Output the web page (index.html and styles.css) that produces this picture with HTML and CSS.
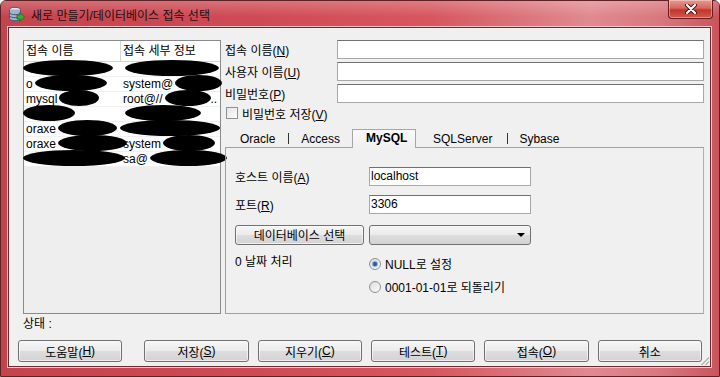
FILE: index.html
```html
<!DOCTYPE html>
<html lang="ko">
<head>
    <meta charset="UTF-8">
    <title>새로 만들기/데이터베이스 접속 선택</title>
    <link rel="stylesheet" href="styles.css">
</head>
<body>
    <div class="window">
        <!-- Title bar -->
        <div class="titlebar">
            <svg class="app-icon" width="17" height="17" viewBox="0 0 17 17">
                <ellipse cx="7" cy="3.5" rx="5.5" ry="2.2" fill="#dfe8f2" stroke="#4a5c78"/>
                <path d="M1.5 3.5 V12.5 A5.5 2.2 0 0 0 12.5 12.5 V3.5" fill="#9fb3cc" stroke="#4a5c78"/>
                <path d="M1.5 6.5 A5.5 2.2 0 0 0 12.5 6.5 M1.5 9.5 A5.5 2.2 0 0 0 12.5 9.5" fill="none" stroke="#4a5c78"/>
                <path d="M9 9 H12 V6.5 L16.5 11 L12 15.5 V13 H9 Z" fill="#3aa83a" stroke="#1d6b1d" stroke-width="0.8"/>
            </svg>
            <span class="title">새로 만들기/데이터베이스 접속 선택</span>
            <div class="close-btn">
                <svg width="14" height="10" viewBox="0 0 14 10">
                    <path d="M3 1 L11 9 M11 1 L3 9" stroke="#4a1010" stroke-width="4" stroke-linecap="round"/>
                    <path d="M3 1 L11 9 M11 1 L3 9" stroke="#fff" stroke-width="2.2" stroke-linecap="round"/>
                </svg>
            </div>
        </div>

        <div class="client">
            <div class="main">
                <!-- Connection list -->
                <div class="conn-list">
                    <div class="list-head">
                        <div class="cell">접속 이름</div>
                        <div class="cell">접속 세부 정보</div>
                    </div>
                    <div class="list-row">
                        <div class="cell"><span class="blob b88 pull"></span></div>
                        <div class="cell"><span class="blob b92"></span></div>
                    </div>
                    <div class="list-row">
                        <div class="cell">o<span class="blob b70"></span></div>
                        <div class="cell">system@<span class="blob b45"></span></div>
                    </div>
                    <div class="list-row">
                        <div class="cell">mysql<span class="blob b38"></span></div>
                        <div class="cell">root@//<span class="blob b44"></span>..</div>
                    </div>
                    <div class="list-row">
                        <div class="cell"><span class="blob b50 pull"></span></div>
                        <div class="cell"><span class="blob b74"></span></div>
                    </div>
                    <div class="list-row">
                        <div class="cell">oraxe<span class="blob b57"></span></div>
                        <div class="cell"><span class="blob b98 pull"></span></div>
                    </div>
                    <div class="list-row">
                        <div class="cell">oraxe<span class="blob b67"></span></div>
                        <div class="cell">system<span class="blob b50"></span></div>
                    </div>
                    <div class="list-row">
                        <div class="cell"><span class="blob b100 pull"></span></div>
                        <div class="cell">sa@<span class="blob b75"></span></div>
                    </div>
                </div>

                <!-- Connection form -->
                <div class="form">
                    <div class="field">
                        <label>접속 이름(<u>N</u>)</label>
                        <div class="input wide"></div>
                    </div>
                    <div class="field">
                        <label>사용자 이름(<u>U</u>)</label>
                        <div class="input wide"></div>
                    </div>
                    <div class="field">
                        <label>비밀번호(<u>P</u>)</label>
                        <div class="input wide"></div>
                    </div>
                    <div class="check-row">
                        <span class="checkbox"></span>
                        <span>비밀번호 저장(<u>V</u>)</span>
                    </div>

                    <div class="tabs">
                        <span class="tab t-oracle">Oracle</span>
                        <span class="tab-sep s1"></span>
                        <span class="tab t-access">Access</span>
                        <span class="tab active">MySQL</span>
                        <span class="tab t-sqlserver">SQLServer</span>
                        <span class="tab-sep s2"></span>
                        <span class="tab t-sybase">Sybase</span>
                    </div>
                    <div class="tab-panel">
                        <div class="prow first">
                            <label>호스트 이름(<u>A</u>)</label>
                            <div class="input short">localhost</div>
                        </div>
                        <div class="prow">
                            <label>포트(<u>R</u>)</label>
                            <div class="input short">3306</div>
                        </div>
                        <div class="prow combo-row">
                            <div class="btn db-btn">데이터베이스 선택</div>
                            <div class="combo"><span class="arrow"></span></div>
                        </div>
                        <div class="date-row">
                            <label>0 날짜 처리</label>
                            <div class="radios">
                                <div class="radio-item"><span class="radio checked"></span>NULL로 설정</div>
                                <div class="radio-item"><span class="radio"></span>0001-01-01로 되돌리기</div>
                            </div>
                        </div>
                    </div>
                </div>
            </div>

            <div class="status">상태 :</div>

            <div class="buttons">
                <div class="btn foot help">도움말(<u>H</u>)</div>
                <div class="btn foot">저장(<u>S</u>)</div>
                <div class="btn foot">지우기(<u>C</u>)</div>
                <div class="btn foot">테스트(<u>T</u>)</div>
                <div class="btn foot">접속(<u>O</u>)</div>
                <div class="btn foot">취소</div>
            </div>
            <div class="grip"></div>
        </div>
    </div>
</body>
</html>
```

FILE: styles.css
```css
body {
    margin: 0;
    width: 720px;
    height: 377px;
    overflow: hidden;
    font-family: "Liberation Sans", "Noto Sans CJK KR", sans-serif;
    font-size: 12px;
    color: #000;
    background: #fff;
}
u {
    text-decoration: underline;
    text-underline-offset: 1px;
}
.window {
    width: 720px;
    height: 377px;
    box-sizing: border-box;
    padding: 0 8px 9px 7px;
    display: flex;
    flex-direction: column;
    background: linear-gradient(to right, #c4444d 0%, #cf4a54 35%, #d7575f 60%, #e08a90 82%, #d9777e 92%, #c9545c 100%);
    border: 1px solid #5e2226;
    border-radius: 6px 6px 0 0;
}
.titlebar {
    height: 27px;
    display: flex;
    align-items: center;
    position: relative;
    background: linear-gradient(to bottom, rgba(255,255,255,0.22), rgba(255,255,255,0) 60%);
    margin: 0 -8px 0 -7px;
    padding-left: 7px;
}
.app-icon {
    margin-top: 1px;
}
.title {
    margin-left: 6px;
    color: #1e1012;
    font-size: 12px;
    margin-top: 1px;
}
.close-btn {
    position: absolute;
    right: 6px;
    top: -1px;
    width: 43px;
    height: 18px;
    display: flex;
    align-items: center;
    justify-content: center;
    border: 1px solid #6a1c1c;
    border-top: none;
    border-radius: 0 0 4px 4px;
    background: linear-gradient(to bottom, #e79a92 0%, #d8665c 45%, #c1362b 55%, #cf5a4e 100%);
    box-shadow: inset 0 0 0 1px rgba(255,255,255,0.35);
}
.client {
    flex: 1;
    position: relative;
    background: #f0f0f0;
    border: 1px solid #6a2a2f;
    box-shadow: 0 0 0 1px #f2c6c9;
    padding: 12px 8px 4px 14px;
    display: flex;
    flex-direction: column;
}
.main {
    display: flex;
    height: 274px;
}
.conn-list {
    width: 196px;
    border: 1px solid #8a8a8a;
    background: #eeeeee;
}
.list-head, .list-row {
    display: grid;
    grid-template-columns: 97px 1fr;
    background: #fff;
}
.list-head {
    height: 20px;
    line-height: 20px;
    border-bottom: 1px solid #d5d5d5;
}
.list-head .cell:first-child {
    border-right: 1px solid #d5d5d5;
}
.list-row {
    height: 14px;
    line-height: 14px;
    border-bottom: 1px solid #f0f0f0;
}
.cell {
    padding-left: 2px;
    white-space: nowrap;
    overflow: visible;
}
.blob {
    display: inline-block;
    height: 16px;
    background: #000;
    border-radius: 50%;
    vertical-align: middle;
    margin-top: -3px;
    margin-left: 2px;
}
.blob.pull {
    margin-left: -3px;
}
.b38 { width: 40px; }
.b44 { width: 46px; }
.b45 { width: 47px; }
.b50 { width: 52px; }
.b57 { width: 59px; }
.b67 { width: 69px; }
.b70 { width: 72px; }
.b74 { width: 76px; }
.b75 { width: 77px; }
.b88 { width: 90px; }
.b92 { width: 94px; }
.b98 { width: 100px; }
.b100 { width: 102px; }

.form {
    margin-left: 4px;
    width: 480px;
    display: flex;
    flex-direction: column;
}
.field {
    display: flex;
    align-items: center;
    height: 19px;
    margin-bottom: 3px;
}
.field label {
    width: 112px;
}
.input {
    box-sizing: border-box;
    height: 19px;
    background: #fff;
    border: 1px solid #a8a8a8;
    border-top-color: #707070;
    line-height: 17px;
    padding-left: 1px;
}
.input.wide {
    width: 367px;
}
.input.short {
    width: 162px;
}
.check-row {
    display: flex;
    align-items: center;
    height: 14px;
    margin-top: 0;
}
.checkbox {
    box-sizing: border-box;
    width: 12px;
    height: 12px;
    margin-left: 1px;
    margin-right: 4px;
    border: 1px solid #8e8f8f;
    background: linear-gradient(135deg, #e4e4e4, #fdfdfd);
}
.tabs {
    display: flex;
    align-items: center;
    height: 19px;
    margin-top: 8px;
    position: relative;
    z-index: 1;
}
.tab {
    padding-top: 3px;
}
.t-oracle { margin-left: 15px; }
.t-access { margin-left: 12px; }
.t-sqlserver { margin-left: 17px; }
.t-sybase { margin-left: 11px; }
.tab-sep {
    width: 1px;
    height: 11px;
    background: #333;
    margin-top: 3px;
}
.s1 { margin-left: 13px; }
.s2 { margin-left: 15px; }
.tab.active {
    box-sizing: border-box;
    margin-left: 12px;
    width: 64px;
    height: 19px;
    align-self: flex-end;
    padding: 1px 0 0 13px;
    font-weight: bold;
    border: 1px solid #a6a6a6;
    border-bottom: none;
    background: linear-gradient(to bottom, #fafafa, #f0f0f0);
    margin-bottom: -1px;
}
.tab-panel {
    box-sizing: border-box;
    height: 169px;
    border: 1px solid #a0a0a0;
    border-right-color: #b0b0b0;
    padding-left: 9px;
}
.prow {
    display: flex;
    align-items: center;
    height: 19px;
    margin-top: 9px;
}
.prow.first {
    margin-top: 19px;
}
.prow label {
    width: 134px;
}
.combo-row {
    height: 20px;
    margin-top: 11px;
}
.btn {
    box-sizing: border-box;
    display: flex;
    align-items: center;
    justify-content: center;
    border: 1px solid #707070;
    border-radius: 3px;
    background: linear-gradient(to bottom, #f6f6f6 0%, #ebebeb 48%, #dddddd 52%, #d3d3d3 100%);
    box-shadow: inset 0 0 0 1px rgba(255,255,255,0.6);
}
.db-btn {
    width: 129px;
    height: 20px;
    margin-right: 5px;
}
.combo {
    box-sizing: border-box;
    width: 162px;
    height: 20px;
    border: 1px solid #707070;
    border-radius: 3px;
    background: linear-gradient(to bottom, #f6f6f6 0%, #ebebeb 48%, #dddddd 52%, #d3d3d3 100%);
    display: flex;
    align-items: center;
    justify-content: flex-end;
    padding-right: 5px;
}
.arrow {
    width: 0;
    height: 0;
    border-left: 4px solid transparent;
    border-right: 4px solid transparent;
    border-top: 4px solid #000;
}
.date-row {
    display: flex;
    margin-top: 12px;
}
.date-row label {
    width: 134px;
    line-height: 14px;
    margin-top: -2px;
}
.radios {
    display: flex;
    flex-direction: column;
    gap: 9px;
}
.radio-item {
    display: flex;
    align-items: center;
    height: 14px;
}
.radio {
    box-sizing: border-box;
    width: 12px;
    height: 12px;
    border-radius: 50%;
    border: 1px solid #8e8f8f;
    background: linear-gradient(135deg, #dcdcdc, #fdfdfd);
    margin-right: 4px;
    display: flex;
    align-items: center;
    justify-content: center;
}
.radio.checked::after {
    content: "";
    width: 4px;
    height: 4px;
    border-radius: 50%;
    background: #2a5a9e;
    box-shadow: 0 0 1px 1px #7fa6d8;
}
.status {
    height: 26px;
    line-height: 18px;
    padding-top: 1px;
    box-sizing: border-box;
}
.buttons {
    display: flex;
    margin-left: -5px;
    gap: 9px;
}
.btn.foot {
    width: 105px;
    height: 22px;
}
.btn.help {
    margin-right: 13px;
}
.grip {
    position: absolute;
    right: 1px;
    bottom: 1px;
    width: 8px;
    height: 8px;
    background: linear-gradient(135deg, transparent 50%, #b8b8b8 50%, #b8b8b8 60%, transparent 60%, transparent 75%, #b8b8b8 75%, #b8b8b8 85%, transparent 85%);
}
```
